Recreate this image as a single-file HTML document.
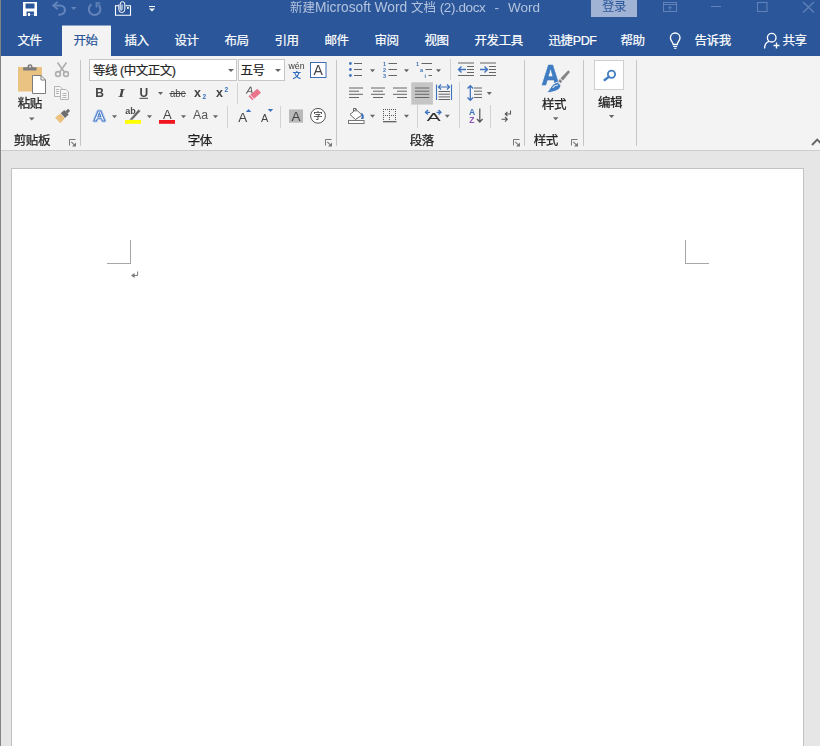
<!DOCTYPE html>
<html lang="zh-CN">
<head>
<meta charset="utf-8">
<title>新建Microsoft Word 文档 (2).docx - Word</title>
<style>
html,body{margin:0;padding:0;}
body{width:820px;height:746px;overflow:hidden;position:relative;background:#e6e6e6;
 font-family:"Liberation Sans","Noto Sans CJK SC",sans-serif;font-size:12.5px;color:#262626;}
.abs{position:absolute;}
#top{position:absolute;left:0;top:0;width:820px;height:56px;background:#2b579a;}
#title{position:absolute;left:290px;top:-2px;width:252px;height:20px;line-height:20px;color:#b4c3de;font-size:13.5px;white-space:nowrap;text-align:left;}
#login{position:absolute;left:591px;top:0;width:46px;height:17px;background:#a0b3d5;letter-spacing:-0.4px;color:#2b579a;font-size:12.5px;line-height:14px;text-align:center;}
#title .c{font-size:12.5px;}
.tab{-webkit-text-stroke:0.2px currentColor;position:absolute;top:30px;letter-spacing:-0.4px;transform:translate(0.5px,0.6px);height:20px;line-height:20px;color:#fff;font-size:12.5px;white-space:nowrap;}
#tabactive{position:absolute;left:62px;top:26px;width:49px;height:30px;background:#f3f3f3;}
#ribbon{position:absolute;left:0;top:56px;width:820px;height:94px;background:#f3f3f3;border-bottom:1px solid #cdcdcd;}
.sep{position:absolute;width:1px;background:#d2d2d2;}
.gsep{background:#c6c6c6;}
.btxt,.glabel,.combo span,#title,#login{will-change:transform;}
.combo span{-webkit-text-stroke:0.2px #222;}
.glabel{letter-spacing:-0.4px;transform:translateX(0.7px);-webkit-text-stroke:0.25px #222;position:absolute;top:132px;height:18px;line-height:18px;font-size:12.5px;color:#222;white-space:nowrap;}
.btxt{letter-spacing:-0.4px;-webkit-text-stroke:0.25px #222;position:absolute;font-size:12.5px;color:#222;white-space:nowrap;line-height:18px;height:18px;}
.dd{position:absolute;width:0;height:0;border-left:3px solid transparent;border-right:3px solid transparent;border-top:3px solid #666;}
.combo{letter-spacing:-0.5px;position:absolute;top:59px;height:20px;background:#fff;border:1px solid #c6c6c6;font-size:12.5px;line-height:22px;color:#262626;white-space:nowrap;}
svg{position:absolute;overflow:visible;will-change:transform;}
#page{position:absolute;left:11px;top:168px;width:791px;height:600px;background:#fff;border:1px solid #c2c2c2;}
#winl{position:absolute;left:0;top:0;width:1px;height:746px;background:#808486;}
</style>
</head>
<body>
<div id="top"></div>
<div id="title"><span class="c">新建</span><span style="font-size:13.75px">Microsoft Word</span> <span class="c">文档</span> <span style="letter-spacing:-0.4px">(2).docx</span>&nbsp; <span style="margin-left:1.6px">-</span>&nbsp; <span style="margin-left:1.5px">Word</span></div>
<div id="login">登录</div>

<div id="tabactive"></div>
<div class="tab" style="left:17px">文件</div>
<div class="tab" style="left:73px;color:#2b579a">开始</div>
<div class="tab" style="left:124px">插入</div>
<div class="tab" style="left:174px">设计</div>
<div class="tab" style="left:224px">布局</div>
<div class="tab" style="left:274px">引用</div>
<div class="tab" style="left:324px">邮件</div>
<div class="tab" style="left:374px">审阅</div>
<div class="tab" style="left:424px">视图</div>
<div class="tab" style="left:474px">开发工具</div>
<div class="tab" style="left:548px">迅捷PDF</div>
<div class="tab" style="left:620px">帮助</div>
<div class="tab" style="left:694px">告诉我</div>
<div class="tab" style="left:782px">共享</div>

<div id="ribbon"></div>
<!--ICONS1S--><svg width="820" height="160" viewBox="0 0 820 160" style="left:0;top:0">
<rect x="62" y="25.500" width="48.800" height="1" fill="#f3f3f3"/>
<!-- QAT -->
<g id="save" fill="#fff">
<path d="M23 2h14v14h-14z M25.500 3.500v5h9v-5z M26.500 11.500v3h7.500v-3z" fill-rule="evenodd"/>
<rect x="28" y="13" width="2" height="3"/>
<rect x="26.500" y="14.500" width="1.500" height="1.500" fill="#2b579a"/><rect x="30" y="14.500" width="4" height="1.500" fill="#2b579a"/>
</g>
<g id="undo" fill="none" stroke="#6383bb" stroke-width="2.100">
<path d="M54 5.500h6a5 4.600 0 0 1 5 4.600c0 3.200-3 4.600-6.500 4.800" />
<path d="M57.700 1.800 53.200 5.500 57.700 9.200" stroke-width="1.800"/>
</g>
<path d="M71 7h5.500l-2.750 3z" fill="#6383bb"/>
<g id="redo" fill="none" stroke="#6383bb" stroke-width="2">
<path d="M91.500 4.300a5.800 5.800 0 1 0 6.800 0.400"/>
<path d="M96.500 7.500v-4.500h3.800" stroke-width="1.700"/>
</g>
<g id="clip" fill="none" stroke="#fff" stroke-width="1.100">
<path d="M118.500 5.700h-3v9.500h15v-9.500h-5"/>
<path d="M118.800 4.500v5a3 3 0 0 0 6 0v-5.500a2.300 2.300 0 0 0-4.600 0v5.300a0.900 0.900 0 0 0 1.800 0v-4.800" stroke-width="1"/>
<rect x="127" y="7" width="1.800" height="1.800" fill="#fff" stroke="none"/>
</g>
<g fill="#fff"><rect x="149" y="6" width="6" height="1"/><path d="M149 8.500h6l-3 3z"/></g>
<!-- window controls -->
<g fill="none" stroke="#6282ba" stroke-width="1">
<rect x="663.500" y="2.500" width="13" height="9"/>
<path d="M663.500 4.500h13"/>
<path d="M670 10.500v-4M668 8.300l2-2 2 2"/>
<path d="M711 6.500h10"/>
<rect x="757.500" y="2.500" width="9.500" height="9"/>
<path d="M803 2l11 10.500M814 2l-11 10.500" stroke-width="1.200"/>
</g>
<!-- bulb -->
<g fill="none" stroke="#fff" stroke-width="1.350">
<path d="M673.200 44.500c0-2.500-2.800-3.500-2.800-6.700a4.800 4.800 0 0 1 9.600 0c0 3.200-2.800 4.200-2.800 6.700z"/>
<path d="M673.200 46.500h4M674 48.300h2.500" stroke-width="1"/>
</g>
<!-- share person -->
<g fill="none" stroke="#fff" stroke-width="1.350">
<circle cx="771.700" cy="37.700" r="4.300"/>
<path d="M764.600 48.500c0-4.500 2-6.500 4.500-7.200"/>
<path d="M773.500 45.500h6M776.500 42.500v6"/>
</g>
<!-- PASTE -->
<rect x="18" y="67" width="24" height="24.500" fill="#eac282"/>
<path d="M23.200 70.600v-3.400h4.300v-0.700a2.500 2.300 0 0 1 5 0v0.700h4v3.400z" fill="#7c7c7c"/>
<rect x="29.300" y="65.800" width="1.600" height="1.600" fill="#f3f3f3"/>
<path d="M32.500 75.500h8.500l4.500 4.500v13.500h-13z" fill="#fff" stroke="#7c7c7c" stroke-width="1"/>
<path d="M41 75.500v4.500h4.500" fill="none" stroke="#7c7c7c" stroke-width="1"/>
<path d="M29 117.500h5.500l-2.750 3z" fill="#666"/>
<!-- cut -->
<g fill="none" stroke="#aeaeae" stroke-width="1.600">
<path d="M57.500 62.500 65 73M66.500 62.500 59 73"/>
<circle cx="58" cy="74" r="2.400"/><circle cx="66" cy="74" r="2.400"/>
</g>
<!-- copy -->
<g fill="#f6f6f6" stroke="#b4b4b4" stroke-width="1">
<path d="M54.500 86.500h5.500l2.500 2.500v7.500h-8z"/>
<path d="M60.500 89.500h5.500l2.500 2.500v7.500h-8z"/>
<path d="M56 89.500h3M56 91.500h3M56 93.500h3M62.500 93.500h4M62.500 95.500h4M62.500 97.500h4" fill="none"/>
</g>
<!-- format painter -->
<g transform="translate(-0.2 0.6)">
<path d="M70.300 110.400 68.300 108.200 65.700 110.600 67.700 112.800z" fill="#6e6e6e"/>
<path d="M68.900 114 64.500 109.300 60.900 112.700 65.200 117.400z" fill="#6e6e6e"/>
<path d="M64.800 117.900 60.300 113.100 55.300 117 60.500 122.600z" fill="#e9bd74"/>
<path d="M58.500 115.500l4.200 4.600M56.900 116.800l4.200 4.600" stroke="#f1d4a2" stroke-width="0.600" fill="none"/>
</g>
</svg>
<!--ICONS1E-->
<!--ICONS2S--><svg width="820" height="160" viewBox="0 0 820 160" style="left:0;top:0" font-family="'Liberation Sans','Noto Sans CJK SC',sans-serif">
<!-- row1 right -->
<text x="288.500" y="69.300" font-size="9.500" fill="#3c3c3c" textLength="16" lengthAdjust="spacingAndGlyphs">wén</text>
<text x="292.500" y="78.300" font-size="8.500" font-weight="bold" fill="#2f6dc0">文</text>
<rect x="310.500" y="62.500" width="15.500" height="15" fill="#fff" stroke="#3f6fb3" stroke-width="1"/>
<text x="318.200" y="75" font-size="14" fill="#444" text-anchor="middle">A</text>
<!-- row2 -->
<text x="95.300" y="96.700" font-size="12" font-weight="bold" fill="#444">B</text>
<text x="118.300" y="96.700" font-size="12.500" font-weight="bold" font-style="italic" fill="#444" font-family="'Liberation Serif',serif" textLength="6.500" lengthAdjust="spacingAndGlyphs">I</text>
<text x="139.500" y="96.700" font-size="12" font-weight="bold" fill="#444">U</text>
<rect x="139.500" y="97.800" width="8.500" height="1" fill="#444"/>
<path d="M158 92h5l-2.500 3z" fill="#666"/>
<text x="170" y="96.800" font-size="10.500" fill="#444" textLength="15.500" lengthAdjust="spacingAndGlyphs">abc</text>
<rect x="169.500" y="93" width="16.500" height="1" fill="#444"/>
<text x="194" y="96.800" font-size="12.500" font-weight="bold" fill="#444">x</text>
<text x="202.500" y="99" font-size="6.500" font-weight="bold" fill="#2f6dc0">2</text>
<text x="216" y="96.800" font-size="12.500" font-weight="bold" fill="#444">x</text>
<text x="224.500" y="91.500" font-size="6.500" font-weight="bold" fill="#2f6dc0">2</text>
<!-- eraser -->
<text x="246.500" y="94.300" font-size="11" fill="#555" transform="rotate(10 250 90)">A</text>
<path d="M248.500 96.300 257.300 88.800 261 92.800 252.300 100.300z" fill="#e9748c"/>
<path d="M250.300 95 254 99" stroke="#f3f3f3" stroke-width="0.900"/>
<!-- row3 -->
<text x="93" y="121" font-size="14.500" font-weight="bold" fill="#fff" stroke="#b9d0ef" stroke-width="2.800" stroke-linejoin="round" transform="translate(93.500 0) scale(1.130 1) translate(-93 0)">A</text>
<text x="93" y="121" font-size="14.500" font-weight="bold" fill="#fff" stroke="#4a7cc4" stroke-width="0.900" stroke-linejoin="round" transform="translate(93.500 0) scale(1.130 1) translate(-93 0)">A</text>
<path d="M112 115.300h5l-2.500 3z" fill="#666"/>
<!-- highlight -->
<text x="125.200" y="114.300" font-size="9" font-weight="bold" fill="#4a4a4a" textLength="10.500" lengthAdjust="spacingAndGlyphs">ab</text>
<path d="M129 119.900 138.500 109.300 140.800 111 132.500 120z" fill="#666" stroke="#f3f3f3" stroke-width="0.600"/>
<rect x="125" y="120" width="16" height="3.800" fill="#ffff00"/>
<path d="M147 115.300h5l-2.500 3z" fill="#666"/>
<!-- font color -->
<text x="167.300" y="119" font-size="13" fill="#444" text-anchor="middle">A</text>
<rect x="159" y="120" width="16" height="3.800" fill="#f0141e"/>
<path d="M181 115.300h5l-2.500 3z" fill="#666"/>
<text x="193" y="119.300" font-size="12.500" fill="#555" textLength="15" lengthAdjust="spacingAndGlyphs">Aa</text>
<path d="M213 115.300h5l-2.500 3z" fill="#666"/>
<!-- grow / shrink -->
<text x="238.300" y="121.800" font-size="13.500" fill="#444">A</text>
<path d="M245.800 112h5.500l-2.750-3z" fill="#3f73bd"/>
<text x="261" y="121.600" font-size="11" fill="#444">A</text>
<path d="M267.700 109h5.500l-2.750 3z" fill="#3f73bd"/>
<!-- shaded A -->
<rect x="289" y="109.400" width="14" height="13.300" fill="#b9b9b9"/>
<text x="296" y="120.500" font-size="13.500" fill="#444" text-anchor="middle">A</text>
<!-- circled -->
<circle cx="318" cy="115.800" r="7.400" fill="#fff" stroke="#555" stroke-width="1"/>
<text x="318" y="119.300" font-size="9.500" fill="#333" text-anchor="middle">字</text>
<!-- launchers -->

<path d="M69.5 145.500v-6h6" fill="none" stroke="#777" stroke-width="1"/><path d="M71.3 141.800l3.500 3.500" stroke="#777" stroke-width="1.100" fill="none"/><path d="M76 142.500v4h-4z" fill="#777"/>
<path d="M325.5 145.500v-6h6" fill="none" stroke="#777" stroke-width="1"/><path d="M327.3 141.800l3.500 3.500" stroke="#777" stroke-width="1.100" fill="none"/><path d="M332 142.500v4h-4z" fill="#777"/>
<path d="M513.5 145.500v-6h6" fill="none" stroke="#777" stroke-width="1"/><path d="M515.3 141.800l3.500 3.500" stroke="#777" stroke-width="1.100" fill="none"/><path d="M520 142.500v4h-4z" fill="#777"/>
<path d="M571.5 145.500v-6h6" fill="none" stroke="#777" stroke-width="1"/><path d="M573.3 141.800l3.500 3.500" stroke="#777" stroke-width="1.100" fill="none"/><path d="M578 142.500v4h-4z" fill="#777"/>
</svg>
<!--ICONS2E-->
<!--ICONS3S--><svg width="820" height="160" viewBox="0 0 820 160" style="left:0;top:0" font-family="'Liberation Sans','Noto Sans CJK SC',sans-serif">
<!-- bullets -->
<g fill="#3f73bd"><circle cx="350.400" cy="63.500" r="1.400"/><circle cx="350.400" cy="69.500" r="1.400"/><circle cx="350.400" cy="75.500" r="1.400"/></g>
<path d="M354 63.500h8M354 69.500h8M354 75.500h8" stroke="#666" stroke-width="1" fill="none"/>
<path d="M370 69.300h5l-2.500 3z" fill="#666"/>
<!-- numbering -->
<g font-size="5.500" font-weight="bold" fill="#3f73bd"><text x="383" y="65.500">1</text><text x="383" y="71.500">2</text><text x="383" y="77.500">3</text></g>
<path d="M388.500 63.500h8.500M388.500 69.500h8.500M388.500 75.500h8.500" stroke="#666" stroke-width="1" fill="none"/>
<path d="M404 69.300h5l-2.500 3z" fill="#666"/>
<!-- multilevel -->
<g font-size="5.500" font-weight="bold" fill="#3f73bd"><text x="416" y="65.500">1</text><text x="420" y="71.500">a</text><text x="424.500" y="77.500">i</text></g>
<path d="M421.500 63.500h10.500M425.500 69.500h6.500M428.500 75.500h3.500" stroke="#666" stroke-width="1" fill="none"/>
<path d="M436 69.300h5l-2.500 3z" fill="#666"/>
<!-- indent -->
<path d="M458 63h16M467 66.500h7M467 69.500h7M467 72.500h7M458 75.500h16" stroke="#666" stroke-width="1" fill="none"/>
<path d="M466 69.500h-7M461.500 66.500l-3 3 3 3" stroke="#3f73bd" stroke-width="1.400" fill="none"/>
<path d="M480 63h16M489 66.500h7M489 69.500h7M489 72.500h7M480 75.500h16" stroke="#666" stroke-width="1" fill="none"/>
<path d="M480 69.500h7M484.500 66.500l3 3-3 3" stroke="#3f73bd" stroke-width="1.400" fill="none"/>
<!-- align -->
<g stroke="#666" stroke-width="1" fill="none">
<path d="M349 88h14M349 91.200h10M349 94.300h14M349 97.500h10"/>
<path d="M371 88h14M373 91.200h10M371 94.300h14M373 97.500h10"/>
<path d="M393 88h14M397 91.200h10M393 94.300h14M397 97.500h10"/>
</g>
<rect x="411.300" y="82.300" width="21.600" height="22.300" fill="#c5c5c5"/>
<path d="M415 88h14.300M415 91.200h14.300M415 94.300h14.300M415 97.500h14.300" stroke="#666" stroke-width="1" fill="none"/>
<!-- distributed -->
<path d="M436.500 84.500v15.500M451.500 84.500v15.500" stroke="#3f73bd" stroke-width="1.100" fill="none"/>
<path d="M438.500 87h11M441 84.500l-2.500 2.500 2.500 2.500M447 84.500l2.500 2.500-2.500 2.500" stroke="#3f73bd" stroke-width="1.200" fill="none"/>
<path d="M438.500 91.500h11.500M438.500 94.200h11.500M438.500 96.900h11.500M438.500 99.500h11.500" stroke="#666" stroke-width="1" fill="none"/>
<!-- line spacing -->
<path d="M470.300 86v14M467.500 88.500l2.800-2.800 2.800 2.800M467.500 97.500l2.800 2.800 2.800-2.800" stroke="#3f73bd" stroke-width="1.300" fill="none"/>
<path d="M474 88h8M474 91.200h8M474 94.300h8M474 97.500h8" stroke="#666" stroke-width="1" fill="none"/>
<path d="M486.800 92h5l-2.500 3z" fill="#666"/>
<!-- shading bucket -->
<rect x="348.500" y="120.500" width="15.500" height="3" fill="#fff" stroke="#777" stroke-width="1"/>
<path d="M350 114.500 356 109.500 362 115 355.500 119.500z" fill="#fff" stroke="#666" stroke-width="1"/>
<path d="M353.500 112v-3.500h2.500v3" fill="none" stroke="#666" stroke-width="1"/>
<path d="M361 112.500c2.500 1 3.500 3.500 2.500 6.500h-2.500c1-2.500 1-4.500 0-6.500z" fill="#3f73bd"/>
<path d="M370 114.800h5l-2.500 3z" fill="#666"/>
<!-- borders -->
<g stroke="#555" stroke-width="1" fill="none" stroke-dasharray="1 1">
<path d="M383 109.500h13M383 115.500h13M383.500 109v12M389.500 109v12M395.500 109v12"/>
</g>
<path d="M383 121.700h13.500" stroke="#555" stroke-width="1.200"/>
<path d="M404 114.800h5l-2.500 3z" fill="#666"/>
<!-- asian layout -->
<text x="433.700" y="121.200" font-size="11" fill="#333" text-anchor="middle" transform="translate(433.700 0) scale(1.900 1) translate(-433.700 0)">A</text>
<path d="M425.500 112.300h4.500M428 110l-2.500 2.300 2.500 2.300M441 112.300h-4.500M438.500 110l2.500 2.300-2.500 2.300" stroke="#3f73bd" stroke-width="1.300" fill="none"/>
<path d="M444.800 114.800h5l-2.500 3z" fill="#666"/>
<!-- sort -->
<text x="469" y="114.600" font-size="8.500" font-weight="bold" fill="#3f73bd">A</text>
<text x="469.200" y="122.700" font-size="8.500" font-weight="bold" fill="#8a55b3">Z</text>
<path d="M479.800 108.500v13.500M477 119l2.800 3 2.800-3" stroke="#555" stroke-width="1.200" fill="none"/>
<!-- show marks -->
<path d="M510.500 110.500v3.500h-5M507.500 111.800l-2.300 2.200 2.300 2.200" stroke="#555" stroke-width="1.100" fill="none"/>
<path d="M501.500 119.300h5.500M505 117l2.300 2.300-2.300 2.300" stroke="#555" stroke-width="1.100" fill="none"/>
<!-- styles big icon -->
<text x="550.500" y="84.700" font-size="30" font-weight="bold" fill="#3f7cc2" stroke="#3f7cc2" stroke-width="0.700" text-anchor="middle" transform="translate(550.500 0) scale(0.840 1) translate(-550.500 0)">A</text>
<path d="M568.300 70.200 570 72 563 80.500 560.500 78.300z" fill="#858585"/>
<path d="M560 79 562.300 81.200 560.500 83.200 558.300 81z" fill="#858585"/>
<path d="M557.800 82.300 561 85.300c-0.500 4.500-6 7-14.500 7.500 3.500-2.500 4.500-9.500 11.300-10.500z" fill="#3f7cc2" stroke="#f3f3f3" stroke-width="1"/>
<path d="M553 87.500c1-1.500 2.500-2.500 4.500-2.500" stroke="#f3f3f3" stroke-width="1.200" fill="none" stroke-linecap="round"/>
<path d="M553 117.200h5.400l-2.700 3z" fill="#666"/>
<!-- editing -->
<rect x="594.500" y="60.500" width="29" height="29" fill="#fff" stroke="#cfcfcf" stroke-width="1"/>
<circle cx="611.500" cy="74.200" r="3.600" fill="none" stroke="#3f7cc2" stroke-width="1.800"/>
<path d="M608.800 76.800 604.600 80" stroke="#3f7cc2" stroke-width="2.300" fill="none" stroke-linecap="round"/>
<path d="M608.900 115h5.400l-2.700 3z" fill="#666"/>
<!-- collapse -->
<path d="M812 145 817.200 139.600 822.500 145" stroke="#666" stroke-width="1.900" fill="none"/>
</svg>
<!--ICONS3E-->
<!--ICONS4-->

<div class="btxt" style="left:17px;top:95px;transform:translateX(0.7px)">粘贴</div>
<div class="btxt" style="left:542px;top:95px;transform:translateY(0.5px)">样式</div>
<div class="btxt" style="left:598px;top:93px;transform:translateY(0.6px)">编辑</div>

<div class="glabel" style="left:13px">剪贴板</div>
<div class="glabel" style="left:187px">字体</div>
<div class="glabel" style="left:408.500px">段落</div>
<div class="glabel" style="left:533px">样式</div>

<div class="sep gsep" style="left:80px;top:60px;height:86px"></div>
<div class="sep gsep" style="left:336px;top:60px;height:86px"></div>
<div class="sep gsep" style="left:524px;top:60px;height:86px"></div>
<div class="sep gsep" style="left:583px;top:60px;height:86px"></div>
<div class="sep gsep" style="left:636px;top:60px;height:86px"></div>

<div class="combo" style="left:89px;width:146px"><span style="margin-left:3px">等线 (中文正文)</span></div>
<div class="combo" style="left:238px;width:45px"><span style="margin-left:1.5px">五号</span></div>
<div class="dd" style="left:228px;top:69px"></div>
<div class="dd" style="left:275px;top:69px"></div>

<div class="sep" style="left:237px;top:83px;height:21px"></div>
<div class="sep" style="left:227px;top:106px;height:22px"></div>
<div class="sep" style="left:280px;top:106px;height:22px"></div>
<div class="sep" style="left:450px;top:59px;height:21px"></div>
<div class="sep" style="left:459px;top:82px;height:46px"></div>
<div class="sep" style="left:417px;top:105px;height:23px"></div>
<div class="sep" style="left:490px;top:105px;height:23px"></div>
<div id="page"></div>
<div id="winl"></div>
<!--PAGEMARKS-->
<div class="abs" style="left:130px;top:240px;width:1px;height:24px;background:#a6a6a6"></div>
<div class="abs" style="left:107px;top:263px;width:24px;height:1px;background:#a6a6a6"></div>
<div class="abs" style="left:685px;top:240px;width:1px;height:24px;background:#a6a6a6"></div>
<div class="abs" style="left:685px;top:263px;width:24px;height:1px;background:#a6a6a6"></div>
<svg width="12" height="12" viewBox="0 0 12 12" style="left:129px;top:270px"><path d="M8.600 1.500v4h-4" fill="none" stroke="#7a7a7a" stroke-width="1"/><path d="M2 5.500 5.600 3v5z" fill="#7a7a7a"/></svg>
</body>
</html>
